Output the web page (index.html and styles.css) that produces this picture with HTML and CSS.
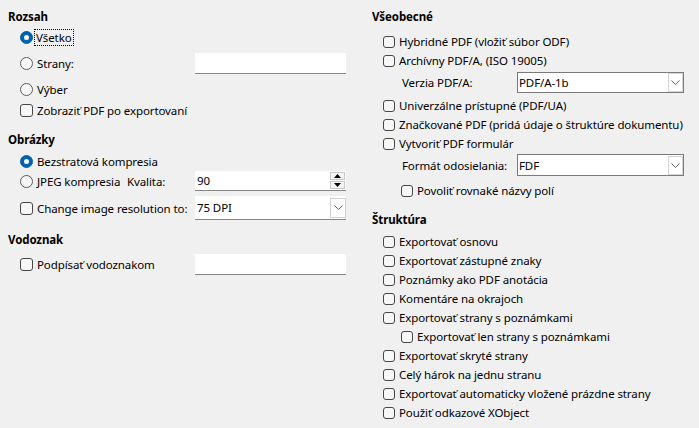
FILE: index.html
```html
<!DOCTYPE html>
<html lang="sk">
<head>
<meta charset="utf-8">
<title>PDF export</title>
<link rel="stylesheet" href="styles.css">
</head>
<body>
<div class="page">
  <div class="col left">
    <div class="hdr h-rozsah">Rozsah</div>
    <div class="row r-vsetko"><span class="radio on"></span><span class="lbl focus">Všetko</span></div>
    <div class="row r-strany"><span class="radio"></span><span class="lbl">Strany:</span><span class="field entry"></span></div>
    <div class="row r-vyber"><span class="radio"></span><span class="lbl">Výber</span></div>
    <div class="row r-zobrazit"><span class="check"></span><span class="lbl">Zobraziť PDF po exportovaní</span></div>

    <div class="hdr h-obrazky">Obrázky</div>
    <div class="row r-bez"><span class="radio on"></span><span class="lbl">Bezstratová kompresia</span></div>
    <div class="row r-jpeg"><span class="radio"></span><span class="lbl jpeg-lbl">JPEG kompresia</span><span class="lbl">Kvalita:</span>
      <span class="field spin"><span class="val">90</span>
        <span class="spin-btns"><span class="sb"><svg width="7" height="4" viewBox="0 0 7 4"><polygon points="0,4 7,4 3.5,0" fill="#000"/></svg></span><span class="sb"><svg width="7" height="4" viewBox="0 0 7 4"><polygon points="0,0 7,0 3.5,4" fill="#000"/></svg></span></span>
      </span>
    </div>
    <div class="row r-change"><span class="check"></span><span class="lbl">Change image resolution to:</span>
      <span class="field combo-l"><span class="val">75 DPI</span><span class="dd"><svg width="9" height="5" viewBox="0 0 9 5"><polyline points="0.5,0.5 4.5,4.5 8.5,0.5" fill="none" stroke="#606060" stroke-width="1"/></svg></span></span>
    </div>

    <div class="hdr h-vodoznak">Vodoznak</div>
    <div class="row r-podpis"><span class="check"></span><span class="lbl">Podpísať vodoznakom</span><span class="field entry"></span></div>
  </div>

  <div class="col right">
    <div class="hdr h-vseob">Všeobecné</div>
    <div class="rrow r-hybrid"><span class="check"></span><span class="lbl">Hybridné PDF (vložiť súbor ODF)</span></div>
    <div class="rrow"><span class="check"></span><span class="lbl">Archívny PDF/A, (ISO 19005)</span></div>
    <div class="crow c-verzia"><span class="lbl">Verzia PDF/A:</span>
      <span class="combo-r"><span class="val">PDF/A-1b</span><span class="dd"><svg width="9" height="5" viewBox="0 0 9 5"><polyline points="0.5,0.5 4.5,4.5 8.5,0.5" fill="none" stroke="#606060" stroke-width="1"/></svg></span></span>
    </div>
    <div class="rrow r-univ"><span class="check"></span><span class="lbl">Univerzálne prístupné (PDF/UA)</span></div>
    <div class="rrow"><span class="check"></span><span class="lbl">Značkované PDF (pridá údaje o štruktúre dokumentu)</span></div>
    <div class="rrow"><span class="check"></span><span class="lbl">Vytvoriť PDF formulár</span></div>
    <div class="crow c-format"><span class="lbl">Formát odosielania:</span>
      <span class="combo-r"><span class="val">FDF</span><span class="dd"><svg width="9" height="5" viewBox="0 0 9 5"><polyline points="0.5,0.5 4.5,4.5 8.5,0.5" fill="none" stroke="#606060" stroke-width="1"/></svg></span></span>
    </div>
    <div class="rrow sub r-povolit"><span class="check"></span><span class="lbl">Povoliť rovnaké názvy polí</span></div>

    <div class="hdr h-strukt">Štruktúra</div>
    <div class="rrow r-osnova"><span class="check"></span><span class="lbl">Exportovať osnovu</span></div>
    <div class="rrow"><span class="check"></span><span class="lbl">Exportovať zástupné znaky</span></div>
    <div class="rrow"><span class="check"></span><span class="lbl">Poznámky ako PDF anotácia</span></div>
    <div class="rrow"><span class="check"></span><span class="lbl">Komentáre na okrajoch</span></div>
    <div class="rrow"><span class="check"></span><span class="lbl">Exportovať strany s poznámkami</span></div>
    <div class="rrow sub"><span class="check"></span><span class="lbl">Exportovať len strany s poznámkami</span></div>
    <div class="rrow"><span class="check"></span><span class="lbl">Exportovať skryté strany</span></div>
    <div class="rrow"><span class="check"></span><span class="lbl">Celý hárok na jednu stranu</span></div>
    <div class="rrow"><span class="check"></span><span class="lbl">Exportovať automaticky vložené prázdne strany</span></div>
    <div class="rrow"><span class="check"></span><span class="lbl">Použiť odkazové XObject</span></div>
  </div>
</div>
</body>
</html>
```

FILE: styles.css
```css
html, body {
  margin: 0;
  padding: 0;
  background: #f0f0f0;
}
body {
  font-family: "Noto Sans", "Open Sans", "DejaVu Sans", sans-serif;
  font-size: 11.5px;
  letter-spacing: -0.1px;
  color: #000;
  width: 699px;
  height: 428px;
  overflow: hidden;
}
.page {
  display: flex;
  gap: 26px;
  padding: 8px 0 0 8px;
}
.col {
  display: flex;
  flex-direction: column;
}
.left { width: 338px; }
.right { width: 312px; }

.hdr {
  font-weight: bold;
  height: 18px;
  line-height: 18px;
}

.row, .rrow, .crow {
  display: flex;
  align-items: center;
  gap: 4px;
}
.row { height: 20px; padding-left: 12px; }
.rrow { height: 19px; padding-left: 11px; }
.rrow.sub { padding-left: 29px; }
.crow { padding-left: 30px; }

.lbl { white-space: nowrap; line-height: 15px; }
.jpeg-lbl { width: 86px; }
.focus {
  outline: 1px dotted #000;
  outline-offset: 0;
  padding: 0 1px;
  margin-left: -2px;
}

/* left column vertical rhythm */
.r-vsetko { margin-top: 1px; }
.r-strany { margin-top: 6px; }
.r-vyber { margin-top: 6px; }
.r-zobrazit { margin-top: 1px; }
.h-obrazky { margin-top: 11px; }
.r-bez { margin-top: 2px; }
.r-change { margin-top: 5px; height: 24px; }
.h-vodoznak { margin-top: 11px; }
.r-podpis { margin-top: 5px; height: 21px; }

/* right column vertical rhythm */
.r-hybrid { margin-top: 6px; }
.c-verzia { margin-top: 2px; height: 21px; }
.r-univ { margin-top: 3px; }
.c-format { margin-top: 1px; height: 22px; }
.r-povolit { margin-top: 5px; }
.h-strukt { margin-top: 11px; }
.r-osnova { margin-top: 3px; }

/* controls */
.radio {
  width: 13px;
  height: 13px;
  box-sizing: border-box;
  border: 1px solid #5c5c5c;
  border-radius: 50%;
  background: #f7f7f7;
  flex: none;
  position: relative;
}
.radio.on {
  background: #0063b1;
  border-color: #0063b1;
}
.radio.on::after {
  content: "";
  position: absolute;
  left: 3px;
  top: 3px;
  width: 5px;
  height: 5px;
  border-radius: 50%;
  background: #fff;
}
.check {
  width: 13px;
  height: 13px;
  box-sizing: border-box;
  border: 1px solid #474747;
  border-radius: 3px;
  background: #f7f7f7;
  flex: none;
}
.rrow .check { width: 12px; height: 12px; }

.field {
  margin-left: auto;
  width: 151px;
  box-sizing: border-box;
  background: #fff;
  border-bottom: 1px solid #868686;
  display: flex;
  align-items: center;
}
.entry { height: 21px; }
.spin { height: 20px; padding-left: 2px; }
.spin .val, .combo-l .val { flex: 1; }
.spin-btns {
  display: flex;
  flex-direction: column;
  gap: 1px;
  margin-right: 1px;
}
.sb {
  width: 15px;
  height: 8px;
  box-sizing: border-box;
  border: 1px solid #c8c8c8;
  background: #f4f4f4;
  display: flex;
  align-items: center;
  justify-content: center;
}
.combo-l { height: 24px; padding-left: 2px; }
.dd {
  width: 16px;
  height: 20px;
  box-sizing: border-box;
  border: 1px solid #d0d0d0;
  background: #fff;
  display: flex;
  align-items: center;
  justify-content: center;
  flex: none;
}
.combo-r {
  margin-left: auto;
  width: 167px;
  height: 100%;
  box-sizing: border-box;
  border: 1px solid #7a7a7a;
  background: #fff;
  display: flex;
  align-items: center;
  padding-left: 1px;
}
.combo-r .val { flex: 1; }
.combo-r .dd { height: 19px; width: 15px; border-color: #d4d4d4; }
```
